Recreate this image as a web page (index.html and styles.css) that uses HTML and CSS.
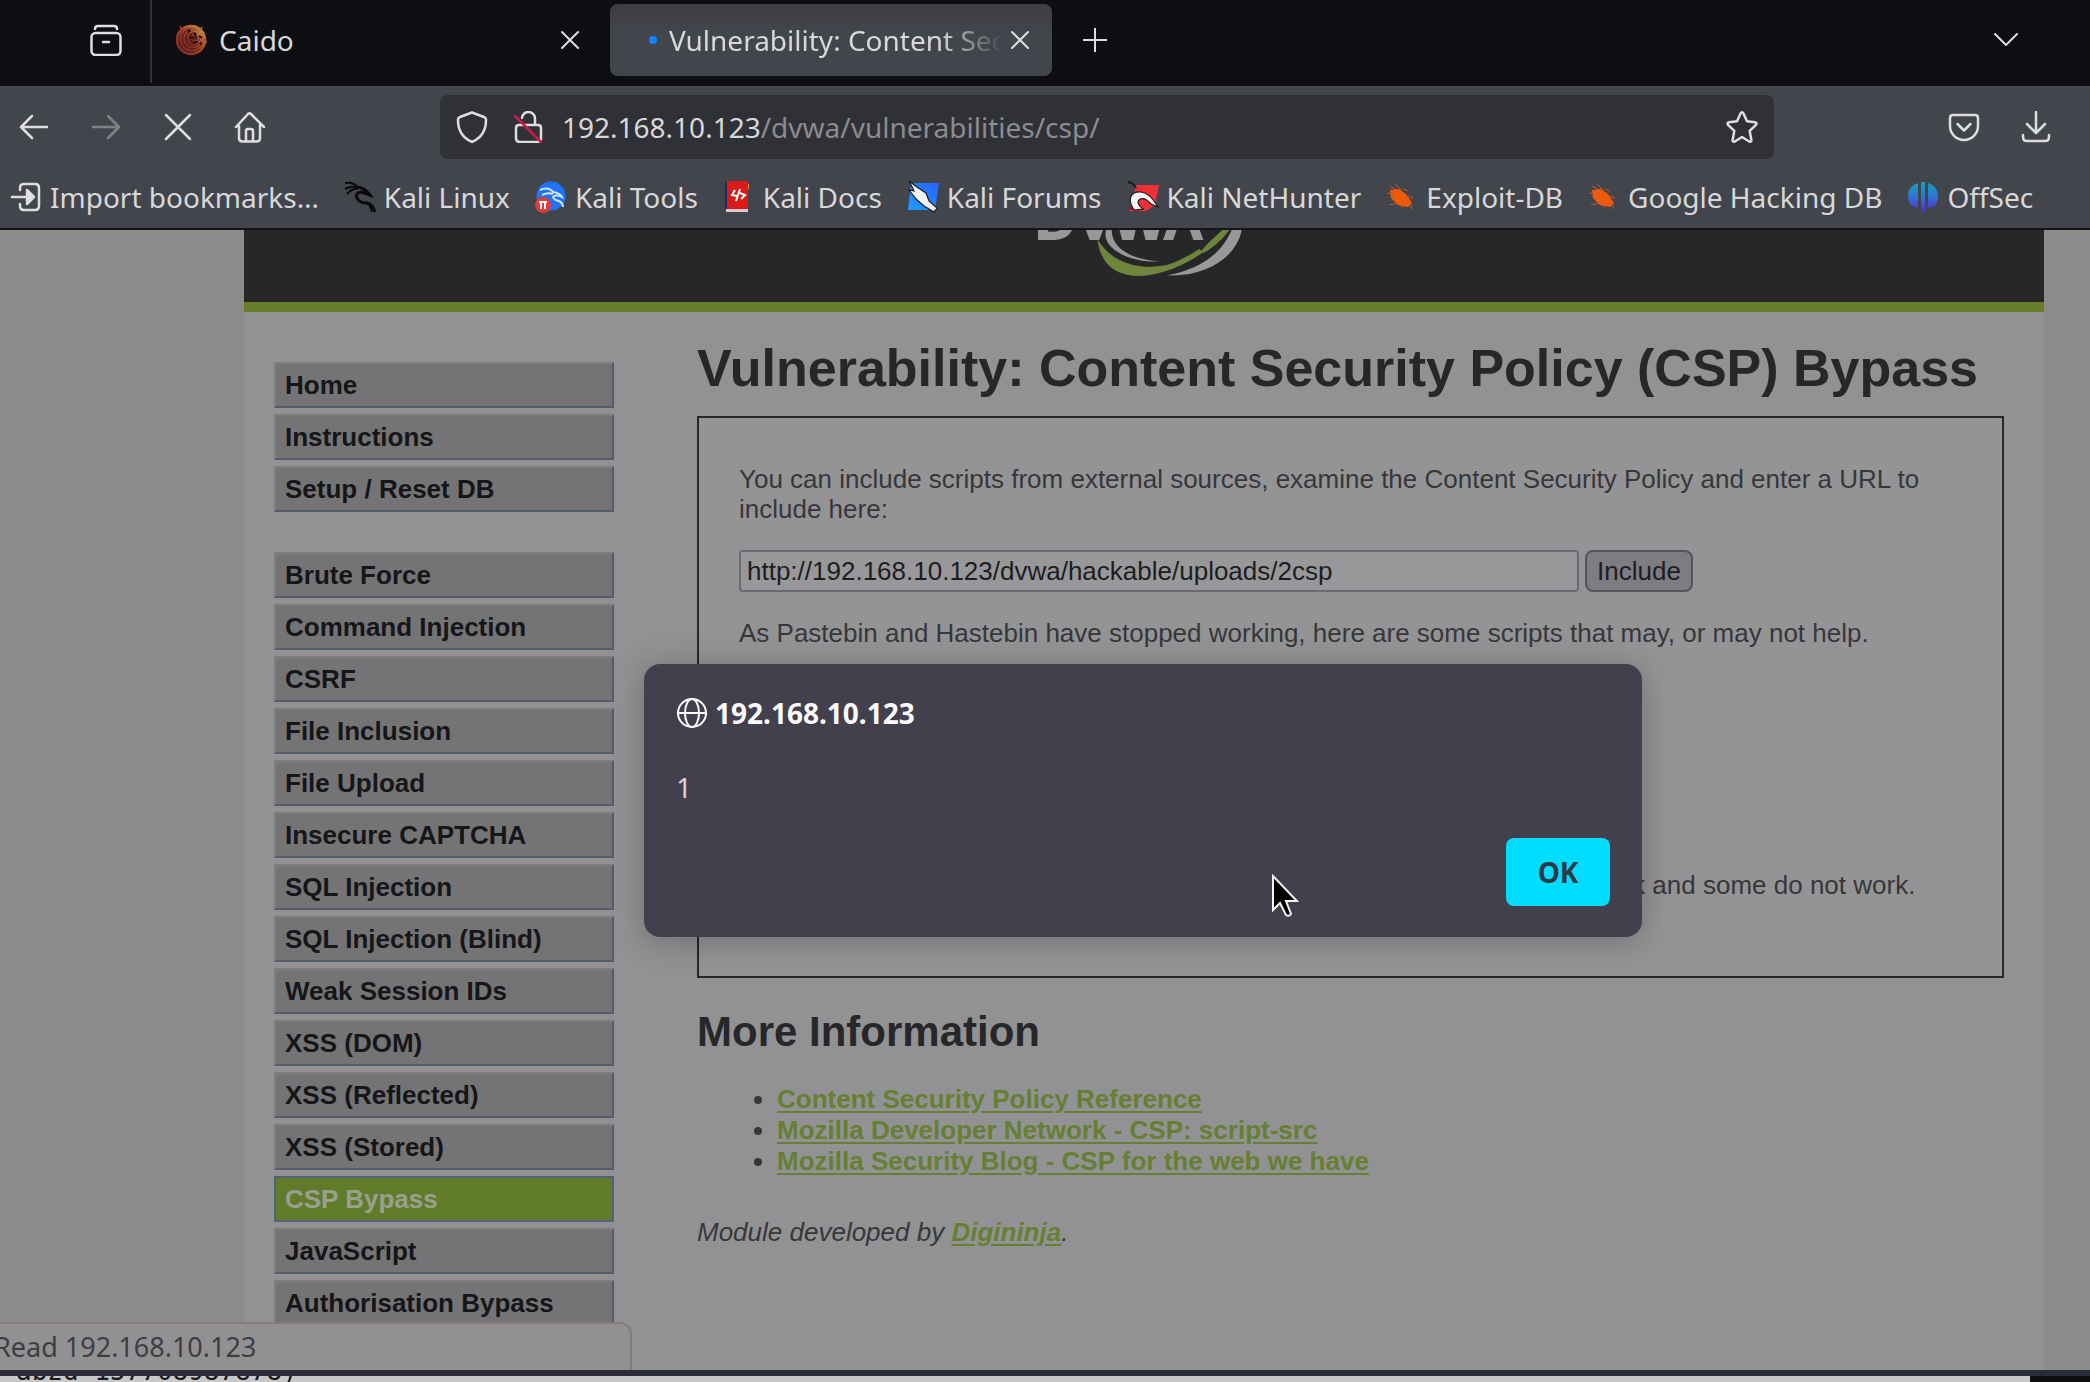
FILE: index.html
```html
<!DOCTYPE html>
<html lang="en">
<head>
<meta charset="utf-8">
<title>Vulnerability: Content Security Policy (CSP) Bypass</title>
<link rel="stylesheet" href="styles.css">
</head>
<body>
<div class="browser">
  <header class="tabstrip">
    <button class="icon-btn recent" aria-label="Recent browsing">
      <svg class="icon line" viewBox="0 0 32 32"><rect x="1.500" y="9" width="29" height="22" rx="4"/><path d="M5 5q0-3 3-3h16q3 0 3 3M13 18h6"/></svg>
    </button>
    <div class="tab">
      <svg class="icon" viewBox="0 0 32 32" fill="none" stroke-width="1.600"><defs><linearGradient id="caido" x1="0" y1="1" x2="1" y2="0"><stop offset="0" stop-color="#7c2524"/><stop offset=".5" stop-color="#a5412b"/><stop offset="1" stop-color="#c8923f"/></linearGradient></defs><circle cx="16" cy="16" r="14" fill="#5a1f19"/><g stroke="url(#caido)"><circle cx="16" cy="16" r="14" stroke-width="2.500"/><path d="M5 2l2 5M27 3l-2 4M29 14l3 5"/><circle cx="17" cy="15" r="11.500"/><circle cx="18" cy="14.500" r="9"/><circle cx="19" cy="14" r="6.500"/><circle cx="20" cy="13.500" r="3.500"/></g><path d="M19 9l2 2M15 13l3 1M24 12l3 2M18 19l4-1M25 19l2 1M13 8l2-2" stroke="#1a0d0c" stroke-width="2"/></svg>
      <span class="tab-title">Caido</span>
      <button class="icon-btn" aria-label="Close tab"><svg class="icon-x line" viewBox="0 0 18 18"><path d="M1 1l16 16M17 1L1 17"/></svg></button>
    </div>
    <div class="tab active">
      <span class="throbber"></span>
      <span class="tab-title">Vulnerability: Content Security Policy</span>
      <button class="icon-btn" aria-label="Close tab"><svg class="icon-x line" viewBox="0 0 18 18"><path d="M1 1l16 16M17 1L1 17"/></svg></button>
    </div>
    <button class="icon-btn new-tab" aria-label="New tab"><svg class="icon-s line" viewBox="0 0 24 24"><path d="M12 0v24M0 12h24"/></svg></button>
    <button class="icon-btn all-tabs" aria-label="List all tabs"><svg class="icon-s line" viewBox="0 0 24 24"><path d="M1 6l11 11L23 6"/></svg></button>
  </header>

  <div class="toolbar">
    <button class="icon-btn" aria-label="Back"><svg class="icon line" viewBox="0 0 32 32"><path d="M29 16H3M14 5L3 16l11 11"/></svg></button>
    <button class="icon-btn dim" aria-label="Forward" disabled><svg class="icon line" viewBox="0 0 32 32"><path d="M3 16h26M18 5l11 11-11 11"/></svg></button>
    <button class="icon-btn" aria-label="Stop"><svg class="icon line" viewBox="0 0 32 32"><path d="M4 4l24 24M28 4L4 28"/></svg></button>
    <button class="icon-btn" aria-label="Home"><svg class="icon line" viewBox="0 0 32 32"><path d="M2 16L14 3q1.500-1.500 3 0l13 13M5 14v13q0 3.500 3.500 3.500h14q3.500 0 3.500-3.500V14M12 30V20q0-2 2-2h3q2 0 2 2v10"/></svg></button>
    <div class="urlbar">
      <svg class="icon line" viewBox="0 0 32 32"><path d="M16 1.500L28 6q2 .8 2 3c0 10-5 18-14 22C7 27 2 19 2 9q0-2.200 2-3z"/></svg>
      <svg class="icon line" viewBox="0 0 32 32"><path d="M27 14H7q-3 0-3 3v10q0 4 4 4h17q4 0 4-4V17q0-3-3-3M23 14V8a6.500 6.500 0 0 0-13-1"/><path class="slash" d="M3 5l26 26"/></svg>
      <span class="address">192.168.10.123<span class="path">/dvwa/vulnerabilities/csp/</span></span>
      <button class="icon-btn" aria-label="Bookmark this page"><svg class="icon line" viewBox="0 0 32 32"><path d="M14.500 2.500q1.500-2.500 3 0l3.500 7.800 8 1q2.600.6.700 2.800l-6 5.800 1.700 9q.1 2.500-2.200 1.600L16 26l-7.200 4.500q-2.300.9-2.200-1.600l1.700-9-6-5.800q-1.900-2.200.7-2.800l8-1z"/></svg></button>
    </div>
    <button class="icon-btn" aria-label="Save to Pocket"><svg class="icon line" viewBox="0 0 32 32"><path d="M5 4h22q3 0 3 3v8a14 14 0 0 1-28 0V7q0-3 3-3zM9.500 13l6.500 6.500 6.500-6.500"/></svg></button>
    <button class="icon-btn" aria-label="Downloads"><svg class="icon line" viewBox="0 0 32 32"><path d="M16 1v20M7 13l9 9 9-9M3 24v2q0 4 4 4h18q4 0 4-4v-2"/></svg></button>
  </div>

  <nav class="bookmarks" aria-label="Bookmarks">
    <a href="#"><svg class="icon line" viewBox="0 0 32 32"><path d="M10 9V7q0-4 4-4h11q4 0 4 4v18q0 4-4 4H14q-4 0-4-4v-2M2 16h18"/><path d="M17 9l7 7-7 7z" fill="#e4e4e6"/></svg>Import bookmarks…</a>
    <a href="#"><svg class="icon" viewBox="0 0 32 32" fill="none" stroke="#0a0a0c"><path d="M1 2q10-1 13 5M1 8q8-4 13-1M3 13q6-6 11-5" stroke-width="2"/><path d="M12 6q8 0 14 8l-9-3q-6 1-4 6t10 5q6 2 8 9" stroke-width="3"/><path d="M20 7l7 9M25 22l3 9" stroke-width="2"/></svg>Kali Linux</a>
    <a href="#"><svg class="icon" viewBox="0 0 32 32"><circle cx="16" cy="15" r="14.500" fill="#1f74f5"/><path d="M5 9q9-4 14 3M7 14q6-3 11-1M18 11q7 1 9 5-6-3-9 0 1 3 6 4 4 2 4 6" fill="none" stroke="#cfe2ff" stroke-width="2"/><circle cx="8" cy="24" r="8" fill="#e5383b"/><path d="M4 21h8M6 21v7M10 21v7" stroke="#fff" stroke-width="2"/></svg>Kali Tools</a>
    <a href="#"><svg class="icon" viewBox="0 0 32 32"><path d="M2 1h5v27H2z" fill="#1b2a66"/><path d="M4 0h21v28H4z" fill="#db1a1a"/><path d="M3 28h22v3H3z" fill="#e0c9cc"/><path d="M25 3h1v5h-1z" fill="#e58a2a"/><path d="M12 9l-3 5 5 1M18 18l4-4-5-2M17 8l-4 12" fill="none" stroke="#fff" stroke-width="2"/></svg>Kali Docs</a>
    <a href="#"><svg class="icon" viewBox="0 0 32 32"><defs><linearGradient id="forum" x1="0" y1="1" x2="1" y2="0"><stop offset="0" stop-color="#1ba1ff"/><stop offset="1" stop-color="#2b5fff"/></linearGradient></defs><path d="M4 2h28l-4 27H1z" fill="url(#forum)"/><path d="M2 0l8 6 9 6 3 8 8 7-3 4-10-6-8-7L2 9l5 1z" fill="#f2f2f2" stroke="#1b1b1f" stroke-width="1.200"/></svg>Kali Forums</a>
    <a href="#"><svg class="icon" viewBox="0 0 32 32"><path d="M9 4h23l-4 20-9 6H2l3-9z" fill="#ef3038"/><path d="M1 29h10l-5-7z" fill="#a30f3c"/><path d="M7 29C-1 17 5 10 14 11q9 1 17 15l-7-3q-7-8-12-4-3 3 4 9z" fill="#f4f4f4" stroke="#1b1b1f" stroke-width="1.200"/><path d="M1 1q6 1 8 6" stroke="#1b1b1f" stroke-width="2" fill="none"/></svg>Kali NetHunter</a>
    <a href="#"><svg class="icon" viewBox="0 0 32 32"><g id="bug"><path d="M4 9l9-1 7 5 6 9-4 4-10-2-7-7z" fill="#ee5a0c"/><path d="M4 5l7 4M9 3l6 6M1 12l6 1M3 24l9-2M17 8l5 2M20 15l7 2M24 22l2 6M14 24l3 3" stroke="#c65a20" stroke-width="1"/></g></svg>Exploit-DB</a>
    <a href="#"><svg class="icon" viewBox="0 0 32 32"><use href="#bug"/></svg>Google Hacking DB</a>
    <a href="#"><svg class="icon" viewBox="0 0 32 32"><defs><linearGradient id="offsec" x1="0" y1="0" x2="0" y2="32" gradientUnits="userSpaceOnUse"><stop offset="0" stop-color="#12a5b5"/><stop offset=".5" stop-color="#2f74d6"/><stop offset="1" stop-color="#5b1fd0"/></linearGradient></defs><path d="M11 2v25Q1 26 1 15.500T11 2zM21 2v25q10-1 10-11.500T21 2zM14 1h1v28h-1zM17 1h1v28h-1zM14.500 1h3v30h-3z" fill="url(#offsec)"/></svg>OffSec</a>
  </nav>

  <div class="viewport">
    <div class="page">
      <div class="page-header">
        <svg class="logo" viewBox="12 30 960 216" role="img" aria-label="DVWA">
          <text class="logo-text" x="166" y="57">DVWA</text>
          <path fill="#6f853c" d="M352 57C362 130 400 168 480 168 590 162 690 92 748 28H728C690 70 630 110 570 132 500 152 400 140 352 57zM664 103Q712 78 748 30H738Q705 70 664 103z"/>
          <path fill="#272729" d="M664 92L712 38 700 38 650 80z"/>
          <path fill="#98989a" d="M378 30C362 90 460 130 537 124 460 118 396 90 395 30zM755 30H785C770 110 680 172 560 166 650 150 720 110 755 30z"/>
        </svg>
      </div>
      <div class="page-body">
        <nav class="menu" aria-label="DVWA">
          <ul>
            <li><a href="#">Home</a></li>
            <li><a href="#">Instructions</a></li>
            <li><a href="#">Setup / Reset DB</a></li>
          </ul>
          <ul>
            <li><a href="#">Brute Force</a></li>
            <li><a href="#">Command Injection</a></li>
            <li><a href="#">CSRF</a></li>
            <li><a href="#">File Inclusion</a></li>
            <li><a href="#">File Upload</a></li>
            <li><a href="#">Insecure CAPTCHA</a></li>
            <li><a href="#">SQL Injection</a></li>
            <li><a href="#">SQL Injection (Blind)</a></li>
            <li><a href="#">Weak Session IDs</a></li>
            <li><a href="#">XSS (DOM)</a></li>
            <li><a href="#">XSS (Reflected)</a></li>
            <li><a href="#">XSS (Stored)</a></li>
            <li><a class="selected" href="#">CSP Bypass</a></li>
            <li><a href="#">JavaScript</a></li>
            <li><a href="#">Authorisation Bypass</a></li>
          </ul>
        </nav>
        <main class="content">
          <h1>Vulnerability: Content Security Policy (CSP) Bypass</h1>
          <section class="vulnerable">
            <p>You can include scripts from external sources, examine the Content Security Policy and enter a URL to include here:</p>
            <form class="include-form">
              <input type="text" aria-label="Script URL" value="http://192.168.10.123/dvwa/hackable/uploads/2csp">
              <button type="button">Include</button>
            </form>
            <p>As Pastebin and Hastebin have stopped working, here are some scripts that may, or may not help.</p>
            <p class="note">Pretend these are on a server like Pastebin and try to work out why some work and some do not work.</p>
          </section>
          <h2>More Information</h2>
          <ul class="links">
            <li><a href="#">Content Security Policy Reference</a></li>
            <li><a href="#">Mozilla Developer Network - CSP: script-src</a></li>
            <li><a href="#">Mozilla Security Blog - CSP for the web we have</a></li>
          </ul>
          <p class="credit">Module developed by <a href="#">Digininja</a>.</p>
        </main>
      </div>
    </div>
    <div class="status">Read 192.168.10.123</div>
    <div class="dialog" role="alertdialog" aria-labelledby="origin">
      <div class="dialog-title">
        <svg class="icon line" viewBox="0 0 32 32"><circle cx="16" cy="16" r="14"/><ellipse cx="16" cy="16" rx="7" ry="14"/><path d="M2 16h28"/></svg>
        <span id="origin">192.168.10.123</span>
      </div>
      <p class="dialog-message">1</p>
      <button class="ok" type="button">OK</button>
    </div>
    <svg class="cursor" viewBox="0 0 28 44"><path d="M2 2v34l7-7 6 12q3 2 5-1l-5-13h11z" fill="#000" stroke="#f4f4f4" stroke-width="2"/></svg>
  </div>
</div>
<footer class="backdrop"><span class="terminal">abzd 157708987878)</span><span class="dark"></span></footer>
</body>
</html>
```
FILE: styles.css
```css
* { box-sizing: border-box; }

body {
  margin: 0;
  height: 100vh;
  overflow: hidden;
  display: flex;
  flex-direction: column;
  background: #c9c8c9;
  font-family: "Noto Sans", sans-serif;
  font-size: 28px;
  line-height: 36px;
  color: #d8d8d9;
}

p, h1, h2, ul { margin: 0; padding: 0; }

button { font: inherit; color: inherit; }

.browser {
  flex: 1;
  min-height: 0;
  display: flex;
  flex-direction: column;
  border-bottom: 6px solid #2a2d37;
}

.icon, .icon-s, .icon-x { display: block; flex: none; width: 32px; height: 32px; }
.icon-s { width: 24px; height: 24px; }
.icon-x { width: 18px; height: 18px; }

.line {
  fill: none;
  stroke: #dedee0;
  stroke-width: 2.5;
  stroke-linecap: round;
  stroke-linejoin: round;
}
.icon-x.line, .icon-s.line { stroke-width: 2; }
.slash { stroke: #d0184a; }

.icon-btn { display: flex; padding: 0; border: 0; background: none; }
.dim { opacity: .4; }

/* Tab strip */
.tabstrip {
  flex: none;
  display: flex;
  align-items: center;
  height: 86px;
  padding-bottom: 6px;
  background: #0d0e12;
}
.recent { margin: 0 28px 0 90px; }
.tab {
  display: flex;
  align-items: center;
  gap: 12px;
  width: 442px;
  height: 72px;
  padding: 0 23px;
}
.tab:not(.active) {
  width: 452px;
  height: 86px;
  border-left: 2px solid #303136;
  margin-right: 8px;
}
.tab.active {
  background: linear-gradient(#3d3e43, #43454d 40%);
  border-radius: 8px;
  padding-left: 39px;
}
.tab-title { flex: 1; overflow: hidden; white-space: nowrap; }
.tab.active .tab-title {
  margin-right: -4px;
  mask-image: linear-gradient(to left, transparent, #000 64px);
}
.throbber { width: 8px; height: 8px; border-radius: 50%; background: #0a84ff; }
.new-tab { margin-left: 31px; }
.all-tabs { margin: 0 72px 0 auto; }

/* Navigation toolbar */
.toolbar {
  flex: none;
  display: flex;
  align-items: center;
  gap: 40px;
  height: 80px;
  padding: 0 38px 0 18px;
  background: #43454d;
  border-top: 1px solid #4a4b53;
}
.urlbar {
  flex: 1;
  display: flex;
  align-items: center;
  height: 64px;
  margin: 0 134px;
  padding: 0 16px;
  gap: 24px;
  background: #303136;
  border-radius: 8px;
}
.address { flex: 1; margin-left: -6px; }
.path { color: #8b8b90; }

/* Bookmarks bar */
.bookmarks {
  flex: none;
  display: flex;
  align-items: center;
  gap: 25px;
  height: 64px;
  padding-left: 10px;
  background: #43454d;
  border-bottom: 2px solid #141419;
}
.bookmarks a {
  display: flex;
  align-items: center;
  gap: 8px;
  white-space: nowrap;
  color: inherit;
  text-decoration: none;
}

/* Page */
.viewport {
  position: relative;
  flex: 1;
  min-height: 0;
  overflow: hidden;
  background: #8b8b8c;
}
.page {
  min-height: 100%;
  margin: 0 46px 0 244px;
  background: #929294;
  font-family: "Liberation Sans", Arial, sans-serif;
  font-size: 26px;
  line-height: 30px;
  color: #37373a;
}
.page-header {
  display: flex;
  justify-content: center;
  background: #272729;
  border-bottom: 10px solid #667d2a;
}
.logo { display: block; width: 320px; height: 72px; }
.logo-text {
  font: bold 168px "Liberation Sans", Arial, sans-serif;
  fill: #98989a;
  stroke: #98989a;
  stroke-width: 6px;
}
.page-body { display: flex; }

.menu {
  flex: none;
  display: flex;
  flex-direction: column;
  gap: 40px;
  width: 370px;
  padding: 50px 0 0 30px;
}
.menu ul { display: flex; flex-direction: column; gap: 6px; list-style: none; }
.menu a {
  display: block;
  padding: 6px 9px;
  border: 2px solid;
  border-color: #7d7d7f #555b6e #555b6e #7d7d7f;
  background: #747476;
  color: #161618;
  font-weight: bold;
  text-decoration: none;
}
.menu a.selected {
  background: #607c2b;
  border-color: #4f6478;
  color: #9b9f8e;
}

.content { flex: 1; padding: 26px 40px 0 83px; }
h1, h2 { color: #272729; }
h1 { font-size: 52px; line-height: 60px; white-space: nowrap; }
h2 { margin-top: 30px; font-size: 42px; line-height: 48px; }

.vulnerable {
  display: flex;
  flex-direction: column;
  gap: 26px;
  margin-top: 18px;
  padding: 46px 40px 76px;
  border: 2px solid #272729;
  background: #949496;
}
.note { margin-top: 196px; }

.include-form { display: flex; gap: 6px; }
.include-form input {
  width: 840px;
  height: 42px;
  padding: 0 6px;
  border: 2px solid #6b6a72;
  border-radius: 4px;
  background: #98989a;
  font: inherit;
  color: #1d1d1f;
}
.include-form button {
  width: 108px;
  padding: 0;
  border: 2px solid #55545d;
  border-radius: 8px;
  background: #7d7c83;
  color: #1d1d1f;
}

.content a { color: #667f33; font-weight: bold; text-underline-offset: 3px; }
.links { margin-top: 28px; padding-left: 80px; line-height: 31px; }
.credit { margin-top: 40px; font-style: italic; }

/* Link status panel */
.status {
  position: absolute;
  left: 0;
  bottom: 0;
  width: 632px;
  height: 48px;
  font-size: 27px;
  line-height: 46px;
  text-indent: -6px;
  background: #939093;
  border: 2px solid #857a7e;
  border-width: 2px 2px 0 0;
  border-radius: 0 12px 0 0;
  color: #3c3e42;
}

/* Alert dialog */
.dialog {
  position: absolute;
  left: 644px;
  top: 434px;
  width: 998px;
  display: flex;
  flex-direction: column;
  padding: 31px 32px;
  border-radius: 16px;
  background: #43404d;
  box-shadow: 0 4px 32px rgba(0, 0, 0, .25);
}
.dialog-title {
  display: flex;
  align-items: center;
  gap: 7px;
  font-weight: bold;
  color: #fbfbfe;
}
.dialog-title .line { stroke: #fbfbfe; stroke-width: 2; }
.dialog-message { margin: 38px 0 33px; color: #d4d4d8; }
.ok {
  align-self: flex-end;
  width: 104px;
  height: 68px;
  border: 0;
  border-radius: 8px;
  background: #00ddff;
  color: #2b3a46;
  font-weight: bold;
}

.cursor { position: absolute; left: 1271px; top: 644px; width: 28px; height: 44px; }

/* Windows behind the browser */
.backdrop {
  flex: none;
  display: flex;
  justify-content: space-between;
  align-items: flex-end;
  height: 6px;
  overflow: hidden;
}
.terminal {
  padding-left: 16px;
  font-family: "DejaVu Sans Mono", monospace;
  font-size: 26px;
  line-height: 22px;
  color: #1a1a1c;
}
.dark { width: 60px; height: 8px; background: #0f0f11; }
```
